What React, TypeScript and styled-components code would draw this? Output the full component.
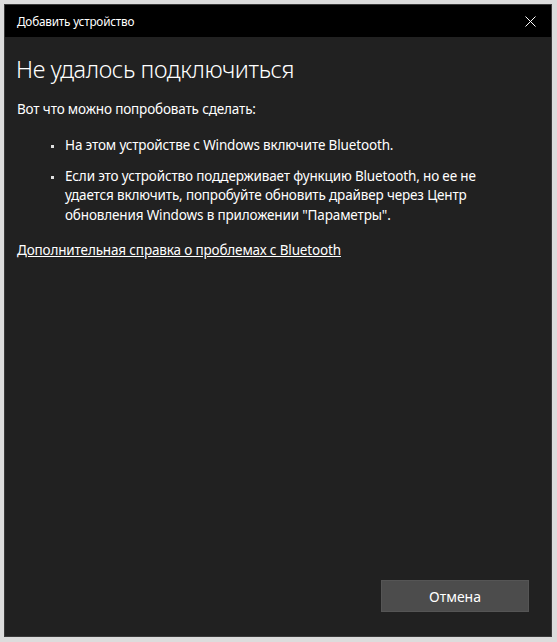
import React from 'react';
import styled, { createGlobalStyle } from 'styled-components';

const Global = createGlobalStyle`
    html, body {
        margin: 0;
        padding: 0;
        background: #e6e6e6;
    }
    body {
        width: 557px;
        height: 642px;
        overflow: hidden;
        font-family: "Noto Sans", "Open Sans", sans-serif;
    }
`

const Frame = styled.div`
    box-sizing: border-box;
    width: 557px;
    height: 642px;
    padding: 4px 5px 5px 4px;
    background: #dcdcdc;
`

const Window = styled.div`
    box-sizing: border-box;
    height: 100%;
    display: flex;
    flex-direction: column;
    background: #212121;
    border: 1px solid #3a3a3a;
`

const TitleBar = styled.div`
    height: 32px;
    display: flex;
    align-items: center;
    justify-content: space-between;
    background: #000;
    padding: 0 9px 0 12px;
    color: #fff;
    font-size: 11.75px;
    letter-spacing: -0.2px;
`

const Close = styled.button`
    width: 24px;
    height: 24px;
    display: flex;
    align-items: center;
    justify-content: center;
    background: none;
    border: none;
    padding: 0;
    color: #fff;
`

const Content = styled.div`
    flex: 1;
    display: flex;
    flex-direction: column;
    padding: 16px 10px 24px 10px;
    color: #fff;
    font-size: 13.5px;
    letter-spacing: -0.15px;
`

const Heading = styled.h1`
    margin: 0 0 14px 1px;
    font-size: 23.5px;
    font-weight: 300;
    line-height: 32px;
    letter-spacing: -0.4px;
`

const Text = styled.p`
    margin: 0 0 0 2px;
    line-height: 20px;
`

const List = styled.ul`
    margin: 17px 0 15px 0;
    padding: 0 0 0 50px;
    list-style: none;
    display: flex;
    flex-direction: column;
    gap: 11px;
`

const Item = styled.li`
    position: relative;
    line-height: 19.5px;
    max-width: 420px;

    &::before {
        content: "";
        position: absolute;
        left: -14px;
        top: 9px;
        width: 3px;
        height: 3px;
        background: #e0e0e0;
    }
`

const Link = styled.a`
    align-self: flex-start;
    margin-left: 2px;
    color: #fff;
    line-height: 20px;
    text-decoration: underline;
    text-underline-offset: 1px;
`

const Footer = styled.div`
    margin-top: auto;
    display: flex;
    justify-content: flex-end;
    padding-right: 12px;
`

const Button = styled.button`
    width: 148px;
    height: 32px;
    background: #4c4c4c;
    border: 1px solid #555;
    color: #fff;
    font-family: inherit;
    font-size: 14px;
`

export default function App() {
    return (
        <Frame>
            <Global />
            <Window>
                <TitleBar>
                    <span>Добавить устройство</span>
                    <Close aria-label="Закрыть">
                        <svg width="11" height="11" viewBox="0 0 11 11">
                            <path d="M0.5 0.5 L10.5 10.5 M10.5 0.5 L0.5 10.5" stroke="#fff" strokeWidth="1" />
                        </svg>
                    </Close>
                </TitleBar>
                <Content>
                    <Heading>Не удалось подключиться</Heading>
                    <Text>Вот что можно попробовать сделать:</Text>
                    <List>
                        <Item>На этом устройстве с Windows включите Bluetooth.</Item>
                        <Item>
                            Если это устройство поддерживает функцию Bluetooth, но ее не удается включить,
                            попробуйте обновить драйвер через Центр обновления Windows в приложении "Параметры".
                        </Item>
                    </List>
                    <Link href="#">Дополнительная справка о проблемах с Bluetooth</Link>
                    <Footer>
                        <Button>Отмена</Button>
                    </Footer>
                </Content>
            </Window>
        </Frame>
    );
}
